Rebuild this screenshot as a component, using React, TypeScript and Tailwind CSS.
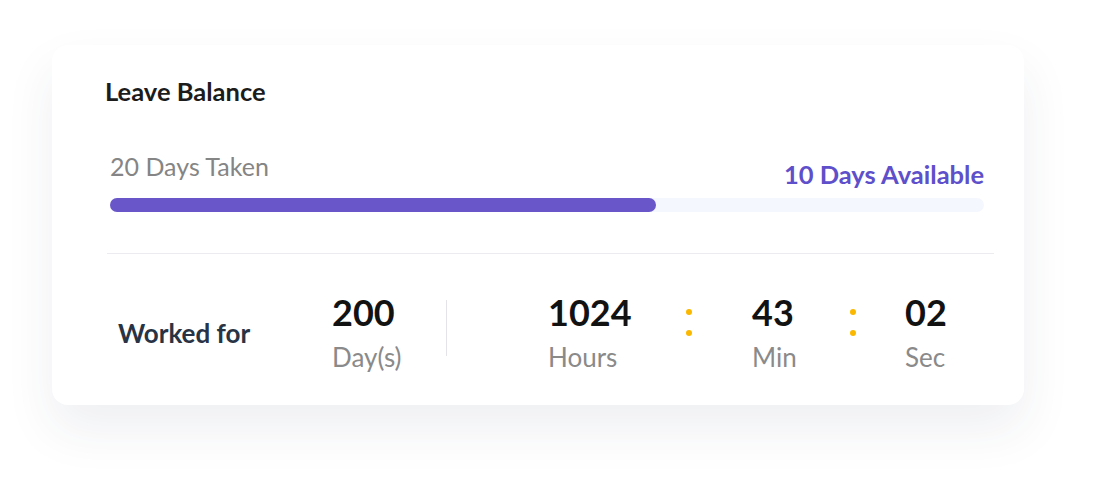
import React from 'react';

const timeParts = [
  { value: '1024', label: 'Hours', ml: 'ml-[101px]', w: 'w-[139px]' },
  { value: '43', label: 'Min', ml: 'ml-[59px]', w: 'w-[99px]' },
  { value: '02', label: 'Sec', ml: 'ml-[48px]', w: 'w-[80px]' },
];

function Colon() {
  return (
    <div className="flex flex-col gap-[15px] mb-[20px] w-[6px] -ml-[1px] mr-[1px]">
      <span className="block w-[6px] h-[6px] rounded-full bg-[#fbb800]"></span>
      <span className="block w-[6px] h-[6px] rounded-full bg-[#fbb800]"></span>
    </div>);
}

function Stat({ value, label }: {value: string;label: string;}) {
  return (
    <div className="flex flex-col">
      <span className="text-[36px] leading-[40px] font-bold text-[#121212]">{value}</span>
      <span className="text-[26px] leading-[32px] mt-[9px] text-[#8a8a8a]">{label}</span>
    </div>);
}

export default function App() {
  const taken = 20;
  const available = 10;
  const pct = 62.5;
  return (
    <div className="w-[1103px] h-[492px] bg-white pt-[45px] pl-[52px]" style={{ fontFamily: 'Lato, "Noto Sans", sans-serif' }}>
      <div className="w-[972px] bg-white rounded-2xl shadow-[0_24px_50px_rgba(40,50,90,0.08)] pt-[30px] pb-[32px]">
        <h2 className="ml-[53px] text-[25.5px] leading-[32px] font-bold text-[#1c1c1c]">Leave Balance</h2>

        <div className="mt-[43px] ml-[58px] mr-[40px] flex justify-between items-end">
          <span className="text-[25px] leading-[32px] mb-[8px] text-[#858585]">{taken} Days Taken</span>
          <span className="text-[25.5px] leading-[32px] font-bold text-[#5e4fca]">{available} Days Available</span>
        </div>

        <div className="mt-[8px] ml-[58px] mr-[40px] h-[14px] rounded-full bg-[#f5f7fe]">
          <div className="h-full rounded-full bg-[#6956c9]" style={{ width: `${pct}%` }}></div>
        </div>

        <div className="mt-[41px] ml-[55px] mr-[30px] h-px bg-[#ececf0]"></div>

        <div className="mt-[38px] pl-[66px] flex items-center">
          <span className="w-[214px] text-[26px] leading-[32px] font-bold text-[#283445]">Worked for</span>
          <div className="w-[114px]">
            <Stat value="200" label="Day(s)" />
          </div>
          <div className="w-px h-[56px] bg-[#e4e4e8] mb-[9px]"></div>
          {timeParts.map((p, i) =>
          <React.Fragment key={p.label}>
              <div className={`${p.ml} ${p.w}`}>
                <Stat value={p.value} label={p.label} />
              </div>
              {i < timeParts.length - 1 && <Colon />}
            </React.Fragment>
          )}
        </div>
      </div>
    </div>);
}
